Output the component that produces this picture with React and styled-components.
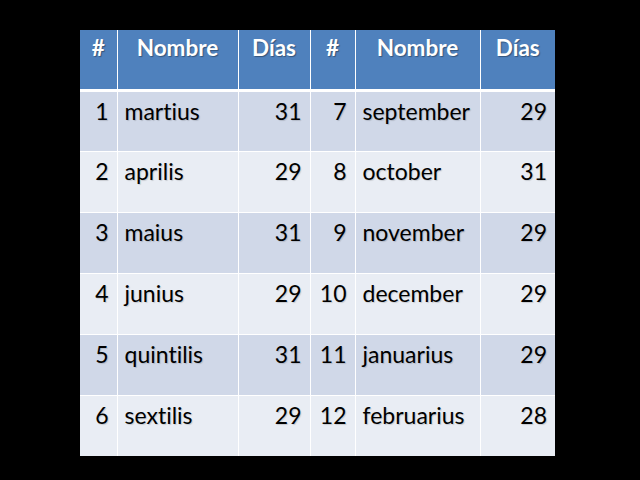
import React from "react"
import styled, { createGlobalStyle } from "styled-components"

const months = [
  [1, "martius", 31, 7, "september", 29],
  [2, "aprilis", 29, 8, "october", 31],
  [3, "maius", 31, 9, "november", 29],
  [4, "junius", 29, 10, "december", 29],
  [5, "quintilis", 31, 11, "januarius", 29],
  [6, "sextilis", 29, 12, "februarius", 28],
]

const widths = [37, 121, 72, 45, 125, 75]

const App = () => {
  return <Slide>
    <GlobalStyle />
    <Table>
      <colgroup>
        {widths.map((w, i) => <col key={i} style={{ width: w }} />)}
      </colgroup>
      <thead>
        <tr>
          <HeadCell>#</HeadCell>
          <HeadCell>Nombre</HeadCell>
          <HeadCell>Días</HeadCell>
          <HeadCell>#</HeadCell>
          <HeadCell>Nombre</HeadCell>
          <HeadCell>Días</HeadCell>
        </tr>
      </thead>
      <tbody>
        {months.map((m, i) => (
          <Row key={i} $odd={i % 2 === 0}>
            <NumCell>{m[0]}</NumCell>
            <NameCell>{m[1]}</NameCell>
            <NumCell>{m[2]}</NumCell>
            <NumCell>{m[3]}</NumCell>
            <NameCell>{m[4]}</NameCell>
            <NumCell>{m[5]}</NumCell>
          </Row>
        ))}
      </tbody>
    </Table>
  </Slide>
}

const GlobalStyle = createGlobalStyle`
  html, body {
    margin: 0;
    padding: 0;
    background: #000;
  }
`;

const Slide = styled.div`
  width: 640px;
  height: 480px;
  background: #000;
  display: flex;
  justify-content: flex-start;
  align-items: flex-start;
  padding: 30px 0 0 80px;
  box-sizing: border-box;
  font-family: Lato, "Open Sans", sans-serif;
  font-variant-ligatures: none;
`;

const Table = styled.table`
  border-collapse: collapse;
  table-layout: fixed;
  width: 475px;
`;

const HeadCell = styled.th`
  height: 60px;
  box-sizing: border-box;
  background: #4f81bd;
  color: #fff;
  font-size: 22.5px;
  font-weight: 700;
  text-align: center;
  vertical-align: top;
  padding: 4px 2px 0;
  border: 1px solid #fff;
  border-top: none;
  border-bottom: 3px solid #fff;
  text-shadow: 1px 1px 1px rgba(0, 0, 0, 0.35);
  &:first-child { border-left: none; }
  &:last-child { border-right: none; }
`;

const Row = styled.tr`
  background: ${p => (p.$odd ? "#d0d8e8" : "#e9edf4")};
  &:last-child td { border-bottom: none; }
`;

const Cell = styled.td`
  height: 61px;
  box-sizing: border-box;
  color: #000;
  font-size: 23px;
  vertical-align: top;
  padding: 5px 8px 0 7px;
  border: 1px solid #fff;
  text-shadow: 1px 1px 1px rgba(0, 0, 0, 0.15);
  &:first-child { border-left: none; }
  &:last-child { border-right: none; }
`;

const NumCell = styled(Cell)`
  text-align: right;
`;

const NameCell = styled(Cell)`
  text-align: left;
`;

export default App
